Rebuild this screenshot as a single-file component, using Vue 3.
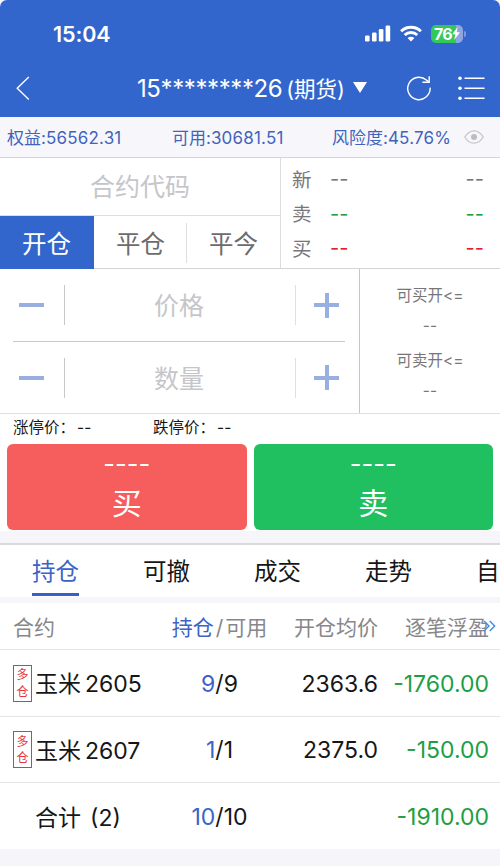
<template>
  <div class="page">
    <header class="header">
      <div class="status-bar">
        <span class="time">15:04</span>
        <div class="status-icons">
          <svg class="signal" width="26" height="17" viewBox="0 0 26 17" fill="#fff">
            <rect x="0" y="10.5" width="4.6" height="6" rx="1.3" />
            <rect x="7" y="7.5" width="4.6" height="9" rx="1.3" />
            <rect x="13.8" y="4" width="4.6" height="12.5" rx="1.3" />
            <rect x="20.6" y="0.5" width="4.6" height="16" rx="1.3" />
          </svg>
          <svg class="wifi" width="22" height="17" viewBox="0 0 22 17" fill="none" stroke="#fff" stroke-width="2.9">
            <path d="M1.1 6.3a14.2 14.2 0 0 1 19.8 0" />
            <path d="M4.7 10a9 9 0 0 1 12.6 0" />
            <path d="M11 16.6 7.6 13.1a4.9 4.9 0 0 1 6.8 0z" fill="#fff" stroke="none" />
          </svg>
          <div class="battery">
            <span>76</span>
            <svg width="8" height="13" viewBox="0 0 8 13" fill="#fff">
              <path d="M5.6 0 0.2 7.3h3L2.3 13 7.9 5.3H4.7z" />
            </svg>
          </div>
          <i class="battery-cap"></i>
        </div>
      </div>
      <div class="nav-bar">
        <svg class="back" width="14" height="24" viewBox="0 0 14 24" fill="none" stroke="#fff" stroke-width="1.4">
          <path d="M12.8 1 1.2 12.2 12.8 23.4" />
        </svg>
        <div class="account">
          <span class="account-no">15********26</span>
          <span class="account-type">(期货)</span>
          <i class="triangle"></i>
        </div>
        <svg class="refresh" width="26" height="26" viewBox="0 0 26 26" fill="none" stroke="#fff" stroke-width="1.4">
          <path d="M24.1 12.6A11.2 11.2 0 1 1 20.4 5.1L23 7" />
          <path d="M23.2 1.2V7.2H16.4" />
        </svg>
        <svg class="menu" width="27" height="25" viewBox="0 0 27 25" fill="#fff">
          <circle cx="2" cy="2.3" r="1.8" />
          <circle cx="2" cy="12.3" r="1.8" />
          <circle cx="2" cy="22.3" r="1.8" />
          <path d="M6.5 1.5h20v1.6h-20zM6.5 11.5h20v1.6h-20zM6.5 21.5h20v1.6h-20z" />
        </svg>
      </div>
    </header>

    <section class="funds">
      <span class="fund equity">权益:<b>56562.31</b></span>
      <span class="fund usable">可用:<b>30681.51</b></span>
      <span class="fund risk">风险度:<b>45.76%</b></span>
      <svg width="20" height="14" viewBox="0 0 20 14" fill="none" stroke="#c6c6ca" stroke-width="1.3">
        <path d="M0.8 7Q4.4 0.8 10 0.8T19.2 7Q15.6 13.2 10 13.2T0.8 7z" />
        <circle cx="10" cy="7" r="3" fill="#bdbdc1" stroke="none" />
      </svg>
    </section>

    <section class="trade-top">
      <div class="trade-left">
        <div class="code-input">合约代码</div>
        <div class="direction">
          <div
            v-for="item in directions"
            :key="item.id"
            class="direction-item"
            :class="{ active: direction === item.id }"
            @click="direction = item.id"
          >
            {{ item.label }}
          </div>
        </div>
      </div>
      <div class="quotes">
        <div v-for="q in quotes" :key="q.label" class="quote" :class="q.color">
          <span class="quote-label">{{ q.label }}</span>
          <span class="dash">--</span>
          <span class="dash quote-volume">--</span>
        </div>
      </div>
    </section>

    <section class="order-form">
      <div class="inputs">
        <div v-for="field in fields" :key="field" class="stepper">
          <i class="minus"></i>
          <div class="stepper-input">{{ field }}</div>
          <i class="plus"></i>
        </div>
      </div>
      <div class="limits">
        <div v-for="l in limits" :key="l" class="limit">
          <span>{{ l }}</span>
          <span class="limit-value">--</span>
        </div>
      </div>
    </section>

    <section class="price-limits">
      <span class="price-limit">涨停价：<b>--</b></span>
      <span class="price-limit">跌停价：<b>--</b></span>
    </section>

    <section class="actions">
      <div class="action buy">
        <span class="action-price">----</span>
        <span class="action-label">买</span>
      </div>
      <div class="action sell">
        <span class="action-price">----</span>
        <span class="action-label">卖</span>
      </div>
    </section>

    <nav class="tabs">
      <div
        v-for="tab in tabs"
        :key="tab"
        class="tab"
        :class="{ active: activeTab === tab }"
        @click="activeTab = tab"
      >
        <span>{{ tab }}</span>
      </div>
    </nav>

    <section class="positions">
      <div class="row head">
        <span class="name">合约</span>
        <span class="volume"><em>持仓</em><span class="slash">/</span>可用</span>
        <span class="price">开仓均价</span>
        <span class="profit">逐笔浮盈</span>
        <svg class="more" width="13" height="12" viewBox="0 0 13 12" fill="none" stroke="#3d8be8" stroke-width="1.4">
          <path d="M1 1l5 5-5 5M6.7 1l5 5-5 5" />
        </svg>
      </div>
      <div v-for="row in rows" :key="row.code" class="row">
        <span class="name">
          <span v-if="row.side" class="side"><i>多</i><i>仓</i></span>
          <span v-else class="side-blank"></span>
          <span class="contract">
            <span>{{ row.name }}</span>
            <span class="code" :class="{ count: !row.side }">{{ row.code }}</span>
          </span>
        </span>
        <span class="volume"><em>{{ row.volume }}</em>/{{ row.usable }}</span>
        <span class="price">{{ row.price }}</span>
        <span class="profit">{{ row.profit }}</span>
      </div>
    </section>
  </div>
</template>

<script setup>
import { ref } from 'vue'

// 开平方向
const directions = [
  { id: 'open', label: '开仓' },
  { id: 'close', label: '平仓' },
  { id: 'close-today', label: '平今' }
]
const direction = ref('open')

// 盘口
const quotes = [
  { label: '新', color: 'gray' },
  { label: '卖', color: 'green' },
  { label: '买', color: 'red' }
]

const fields = ['价格', '数量']
const limits = ['可买开<=', '可卖开<=']

const tabs = ['持仓', '可撤', '成交', '走势', '自选']
const activeTab = ref('持仓')

// 持仓列表
const rows = [
  { side: 'long', name: '玉米', code: '2605', volume: 9, usable: 9, price: '2363.6', profit: '-1760.00' },
  { side: 'long', name: '玉米', code: '2607', volume: 1, usable: 1, price: '2375.0', profit: '-150.00' },
  { side: '', name: '合计', code: '(2)', volume: 10, usable: 10, price: '', profit: '-1910.00' }
]
</script>

<style>
body {
  background: #fff;
}
</style>

<style scoped>
.page {
  width: 500px;
  height: 866px;
  overflow: hidden;
  background: #f5f5fa;
  font-family: Inter, 'Noto Sans CJK SC', sans-serif;
  color: #161616;
}

.page * {
  box-sizing: border-box;
}

.page i,
.page em,
.page b {
  font-style: normal;
  font-weight: inherit;
}

.header {
  height: 117px;
  background: #3366cc;
  color: #fff;
  border-radius: 7px 7px 0 0;
}

.status-bar {
  display: flex;
  align-items: center;
  justify-content: space-between;
  height: 60px;
  padding: 7px 34px 0 53px;
}

.time {
  font-size: 21.5px;
  font-weight: 600;
  letter-spacing: -0.1px;
}

.status-icons {
  display: flex;
  align-items: center;
}

.wifi {
  margin: 0 9px;
}

.battery {
  display: flex;
  align-items: center;
  justify-content: center;
  width: 32px;
  height: 18px;
  border-radius: 5px;
  background: linear-gradient(90deg, #34c759 78%, #8fa5df 78%);
  font-size: 16px;
  font-weight: 700;
  letter-spacing: -0.8px;
}

.battery-cap {
  width: 2px;
  height: 6px;
  margin-left: 1px;
  border-radius: 0 2px 2px 0;
  background: #7c9ade;
}

.nav-bar {
  display: flex;
  align-items: center;
  height: 57px;
  padding: 0 15px 0 16px;
}

.nav-bar svg {
  margin-bottom: 1px;
}

.account {
  display: flex;
  align-items: center;
  width: 231px;
  margin-left: 107px;
  white-space: nowrap;
}

.account-no {
  font-size: 24px;
  letter-spacing: -0.4px;
}

.account-type {
  margin: -3px 0 0 4px;
  font-size: 21.5px;
}

.triangle {
  margin: -2px 0 0 8px;
  border: 7px solid transparent;
  border-top: 11px solid #fff;
  border-bottom: 0;
}

.nav-bar .refresh {
  margin-left: 38px;
}

.nav-bar .menu {
  margin-left: auto;
}

.funds {
  display: flex;
  align-items: center;
  height: 41px;
  padding: 0 16px 0 7px;
  background: #f7f7fb;
  border-bottom: 1px solid #d4d6da;
  color: #4263bd;
  font-size: 17px;
  white-space: nowrap;
}

.fund {
  margin-top: -1px;
}

.fund b {
  letter-spacing: 0.2px;
}

.equity {
  width: 165px;
}

.usable {
  width: 160px;
}

.funds svg {
  margin-left: auto;
}

.trade-top {
  display: flex;
  height: 111px;
  background: #fff;
  border-bottom: 1px solid #d4d4d6;
}

.trade-left {
  width: 281px;
  border-right: 1px solid #dcdce0;
}

.code-input {
  height: 58px;
  line-height: 59px;
  border-bottom: 1px solid #dfdfe2;
  text-align: center;
  font-size: 25px;
  color: #c6c6ca;
}

.direction {
  display: flex;
  height: 53px;
}

.direction-item {
  position: relative;
  flex: 1;
  line-height: 56px;
  text-align: center;
  font-size: 24.5px;
  color: #6c6c6e;
  cursor: pointer;
}

.direction-item:nth-child(2)::after {
  content: '';
  position: absolute;
  top: 7px;
  right: 0;
  width: 1px;
  height: 40px;
  background: #dfdfe2;
}

.direction-item.active {
  flex: 0 0 94px;
  padding-right: 1px;
  background: #3366cc;
  color: #fff;
}

.quotes {
  flex: 1;
  padding: 3px 16px 0 11px;
}

.quote {
  display: flex;
  align-items: center;
  height: 34.6px;
  color: #77777b;
}

.quote-label {
  width: 38px;
  font-size: 19.5px;
}

.dash {
  padding-top: 2px;
  font-size: 20px;
}

.quote-volume {
  margin-left: auto;
}

.green .dash {
  color: #1fa045;
}

.red .dash {
  color: #e0202c;
}

.order-form {
  display: flex;
  height: 145px;
  background: #fff;
  border-bottom: 1px solid #dfdfe2;
}

.inputs {
  width: 360px;
  padding: 0 14px 0 13px;
  border-right: 1px solid #c6c6c8;
}

.stepper {
  display: flex;
  align-items: center;
  height: 73px;
  padding: 0 5px 0 6px;
}

.stepper:first-child {
  border-bottom: 1px solid #c8c8ca;
}

.stepper:last-child {
  height: 71px;
}

.minus {
  width: 25px;
  height: 4px;
  background: #98afe1;
}

.stepper-input {
  width: 232px;
  height: 40px;
  margin: 0 18px 0 20px;
  padding-right: 2px;
  line-height: 42px;
  border-left: 1px solid #c8c8ca;
  border-right: 1px solid #e0e0e2;
  text-align: center;
  font-size: 25px;
  color: #c6c6ca;
}

.plus {
  flex: none;
  width: 25px;
  height: 25px;
  background:
    linear-gradient(#98afe1, #98afe1) center / 25px 4px no-repeat,
    linear-gradient(#98afe1, #98afe1) center / 4px 25px no-repeat;
}

.limits {
  flex: 1;
  padding-top: 12px;
}

.limit {
  display: flex;
  flex-direction: column;
  height: 65px;
  line-height: 30px;
  text-align: center;
  font-size: 15.5px;
  color: #77777b;
}

.price-limits {
  display: flex;
  height: 30px;
  padding-left: 13px;
  background: #fff;
  line-height: 27px;
  font-size: 15.5px;
}

.price-limit {
  width: 140px;
}

.price-limit b {
  margin-left: 2px;
}

.actions {
  display: flex;
  gap: 7px;
  height: 87px;
  padding: 0 7px 1px;
  background: #fff;
}

.action {
  display: flex;
  flex: 1;
  flex-direction: column;
  align-items: center;
  border-radius: 6px;
  color: #fff;
}

.buy {
  background: #f65d5d;
}

.sell {
  background: #20c060;
}

.action-price {
  height: 38px;
  line-height: 40px;
  font-size: 25.5px;
}

.action-label {
  line-height: 43px;
  font-size: 30px;
}

.tabs {
  display: flex;
  height: 54px;
  margin-top: 12px;
  overflow: hidden;
  background: #fff;
  border-top: 2px solid #d9dade;
}

.tab {
  flex: none;
  width: 111px;
  text-align: center;
  font-size: 23.5px;
  cursor: pointer;
}

.tab span {
  display: inline-block;
  height: 51px;
  line-height: 54px;
}

.tab.active {
  color: #3b63c8;
}

.tab.active span {
  border-bottom: 3px solid #3560c8;
}

.positions {
  margin-top: 6px;
  background: #fff;
}

.row {
  position: relative;
  display: flex;
  align-items: center;
  height: 66.6px;
  padding: 2px 11px 0 13px;
  border-bottom: 1px solid #e6e6ea;
  font-size: 23px;
  white-space: nowrap;
}

.row:last-child {
  height: 66px;
  border-bottom: 0;
}

.row.head {
  height: 47px;
  padding-top: 0;
  font-size: 21px;
  color: #87878b;
}

.name {
  display: flex;
  align-items: center;
  width: 139px;
}

.contract {
  display: flex;
  align-items: baseline;
  margin-top: -3px;
}

.code {
  margin-left: 4px;
}

.code.count {
  margin-left: 9px;
}

.side {
  display: flex;
  flex-direction: column;
  justify-content: space-around;
  width: 19px;
  height: 37px;
  margin: -1px 3px 0 0;
  padding: 1px 0;
  border: 1px solid #e2383e;
  text-align: center;
  font-size: 12px;
  line-height: 16px;
  color: #e2383e;
}

.side-blank {
  width: 22px;
}

.volume {
  width: 135px;
  text-align: center;
}

.volume em {
  color: #3b63c8;
}

.head .slash {
  margin: 0 2px;
}

.price {
  width: 91px;
  text-align: right;
}

.profit {
  flex: 1;
  text-align: right;
}

.row:not(.head) .profit {
  color: #1e9e43;
}

.more {
  position: absolute;
  right: 4px;
  top: 17px;
}
</style>
